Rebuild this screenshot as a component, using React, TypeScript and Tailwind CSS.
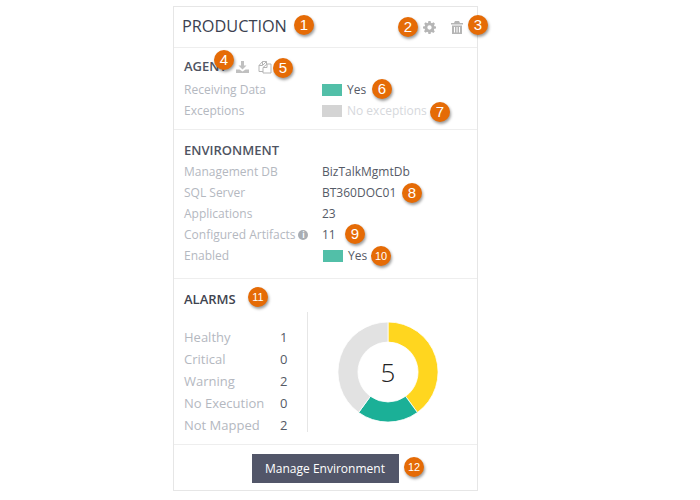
function Badge({ n, className }: { n: number; className: string }) {
  const small = n > 9;
  return (
    <span
      className={`absolute flex h-5 w-5 items-center justify-center rounded-full bg-[#e56b06] font-['Liberation_Sans',sans-serif] text-white shadow-[1px_2px_3px_rgba(0,0,0,0.4)] ${
        small ? 'text-[11px]' : 'text-[15px]'
      } ${className}`}
    >
      {n}
    </span>
  );
}

function Row({ label, children, info }: { label: string; children: React.ReactNode; info?: boolean }) {
  return (
    <div className="flex h-[21px] items-center">
      <div className="flex w-[138px] items-center text-[#b4b8bf]">
        {label}
        {info && (
          <span className="ml-[3px] flex h-[10px] w-[10px] items-center justify-center rounded-full bg-[#a9adb3] text-[8px] font-bold leading-none text-white">
            i
          </span>
        )}
      </div>
      <div className="flex items-center text-[#555a66]">{children}</div>
    </div>
  );
}

function Swatch({ color, className = '' }: { color: string; className?: string }) {
  return <span className={`mr-[5px] h-[12px] w-[20px] ${color} ${className}`} />;
}

function Donut() {
  return (
    <svg width="102" height="102" viewBox="-51 -51 102 102">
      <path d="M0 -50 A50 50 0 0 1 29.4 40.5 L17.6 24.3 A30 30 0 0 0 0 -30 Z" fill="#ffd61f" stroke="#fff" strokeWidth="0.8" />
      <path d="M29.4 40.5 A50 50 0 0 1 -29.4 40.5 L-17.6 24.3 A30 30 0 0 0 17.6 24.3 Z" fill="#1bb097" stroke="#fff" strokeWidth="0.8" />
      <path d="M-29.4 40.5 A50 50 0 0 1 0 -50 L0 -30 A30 30 0 0 0 -17.6 24.3 Z" fill="#e2e2e2" stroke="#fff" strokeWidth="0.8" />
    </svg>
  );
}

export default function App() {
  const alarms: [string, number][] = [
    ['Healthy', 1],
    ['Critical', 0],
    ['Warning', 2],
    ['No Execution', 0],
    ['Not Mapped', 2],
  ];

  return (
    <div className="h-[500px] w-[700px] bg-white pl-[173px] pt-[6px] font-['Open_Sans',sans-serif] text-[12px]">
      <div className="relative h-[485px] w-[305px] border border-[#e6e6e6]">
        <div className="flex h-[41px] items-center justify-between border-b border-[#eeeeee] pl-[8px] pr-[14px]">
          <h1 className="mb-[2px] text-[16.300px] leading-none text-[#3b4150]">PRODUCTION</h1>
          <div className="flex items-center gap-[15px] text-[#b5b5b5]">
            <svg width="13" height="13" viewBox="0 0 24 24" fill="currentColor">
              <path fillRule="evenodd" d="M10 1h4l.6 3.2 2 .8L19.3 3.2l2.8 2.8-1.8 2.7.8 2L24 11v4l-3.2.5-.8 2 1.8 2.7-2.8 2.8-2.7-1.8-2 .8L14 25h-4l-.6-3.2-2-.8-2.7 1.8-2.8-2.8 1.8-2.7-.8-2L0 15v-4l3.2-.3.8-2L2.2 6 5 3.2 7.7 5l1.7-.8zM12 9a4 4 0 1 0 0 8 4 4 0 0 0 0-8z" transform="translate(0 -1)" />
            </svg>
            <svg width="12" height="13" viewBox="0 0 12 13" fill="currentColor">
              <path fillRule="evenodd" d="M4 0h4l1 2h3v1.500H0V2h3zM1 4.500h10V13H1zM3 6v5.500h1V6zm2.500 0v5.500h1V6zM8 6v5.500h1V6z" />
            </svg>
          </div>
        </div>

        <section className="h-[82px] border-b border-[#eeeeee] pl-[10px] pt-[9px]">
          <div className="flex h-[20px] items-center">
            <h2 className="text-[13px] font-semibold text-[#4f5462]">AGENT</h2>
            <svg className="ml-[9px] text-[#c0c0c0]" width="13" height="12" viewBox="0 0 13 12" fill="currentColor">
              <path d="M5 0h3v4.500h2.500L6.500 8.500l-4-4H5zM0 8.500h3.500l3 2 3-2H13V12H0z" />
            </svg>
            <svg className="ml-[9px] text-[#b5b5b5]" width="14" height="14" viewBox="0 0 14 14" fill="none" stroke="currentColor" strokeWidth="1">
              <path d="M1 5.500 4.500 1.500H8.500V4M4.500 1.500V5.500H1V11.500H5M5 5 8.500 1.500M9 4H13V13H5V7.500zM5 7.500H9V4" />
            </svg>
          </div>
          <div className="mt-[2px]">
            <Row label="Receiving Data">
              <Swatch color="bg-[#52bfa8]" />
              Yes
            </Row>
            <Row label="Exceptions">
              <Swatch color="bg-[#d4d4d4]" />
              <span className="text-[#d6d8dc]">No exceptions</span>
            </Row>
          </div>
        </section>

        <section className="h-[149px] border-b border-[#eeeeee] pl-[10px] pt-[10px]">
          <h2 className="h-[20px] text-[13px] font-semibold leading-[20px] text-[#4f5462]">ENVIRONMENT</h2>
          <div className="mt-[1px]">
            <Row label="Management DB">BizTalkMgmtDb</Row>
            <Row label="SQL Server">BT360DOC01</Row>
            <Row label="Applications">23</Row>
            <Row label="Configured Artifacts" info>
              11
            </Row>
            <Row label="Enabled">
              <Swatch color="bg-[#52bfa8]" className="ml-[1px]" />
              Yes
            </Row>
          </div>
        </section>

        <section className="h-[166px] border-b border-[#eeeeee] pl-[10px] pt-[10px]">
          <h2 className="h-[20px] text-[13px] font-semibold leading-[20px] text-[#3f4450]">ALARMS</h2>
          <div className="mt-[3px] flex">
            <div className="h-[120px] w-[124px] border-r border-[#e6e6e6] pt-[15px]">
              {alarms.map(([name, count]) => (
                <div key={name} className="flex h-[22px] items-center text-[13px]">
                  <span className="w-[96px] text-[#b4b8bf]">{name}</span>
                  <span className="text-[#555a66]">{count}</span>
                </div>
              ))}
            </div>
            <div className="relative ml-[29px] mt-[9px] h-[102px] w-[102px]">
              <Donut />
              <span className="absolute inset-0 flex items-center justify-center text-[26px] font-light text-[#222]">5</span>
            </div>
          </div>
        </section>

        <div className="flex h-[45px] justify-center pt-[9px] pr-[1px]">
          <button type="button" className="h-[29px] w-[147px] bg-[#525669] text-[12px] font-medium text-white">
            Manage Environment
          </button>
        </div>

        <Badge n={1} className="left-[120px] top-[8px]" />
        <Badge n={2} className="left-[224px] top-[10px]" />
        <Badge n={3} className="left-[294px] top-[8px]" />
        <Badge n={4} className="left-[40px] top-[43px]" />
        <Badge n={5} className="left-[99px] top-[51px]" />
        <Badge n={6} className="left-[198px] top-[72px]" />
        <Badge n={7} className="left-[256px] top-[95px]" />
        <Badge n={8} className="left-[228px] top-[176px]" />
        <Badge n={9} className="left-[171px] top-[217px]" />
        <Badge n={10} className="left-[197px] top-[239px]" />
        <Badge n={11} className="left-[74px] top-[280px]" />
        <Badge n={12} className="left-[230px] top-[450px]" />
      </div>
    </div>
  );
}
